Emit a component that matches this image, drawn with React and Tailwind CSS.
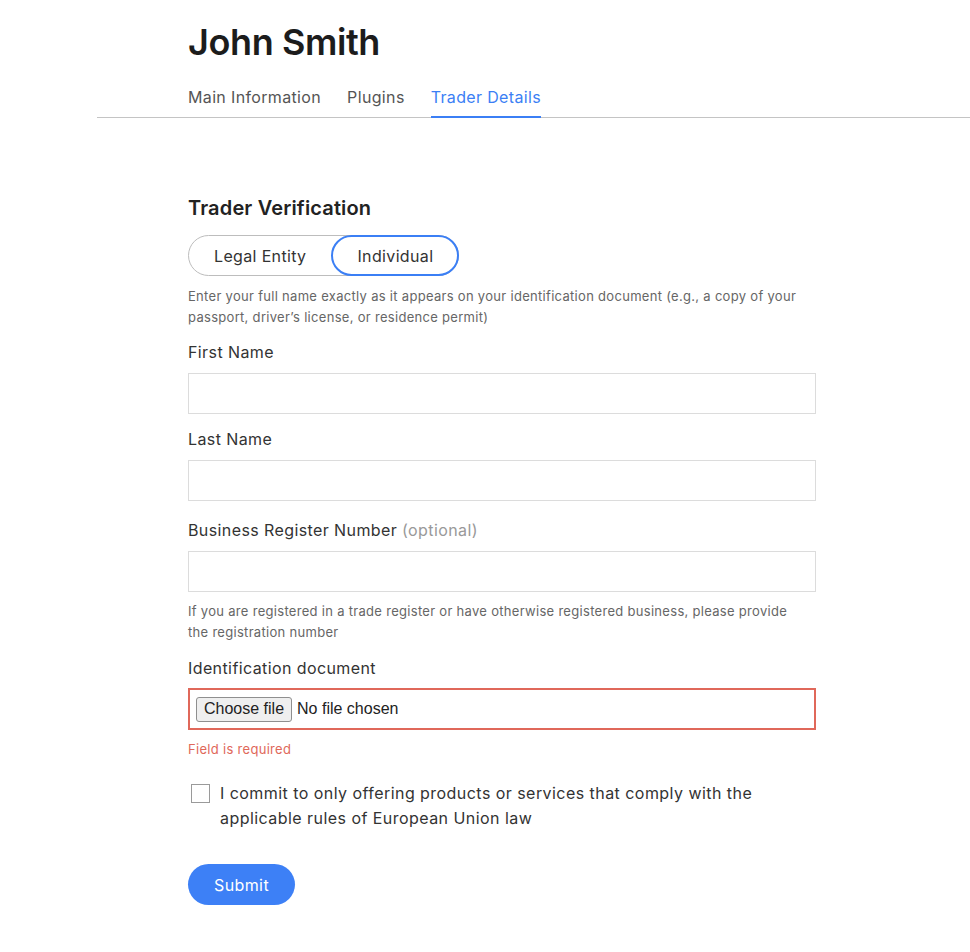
import { useState } from "react";

function Field({ label, optional, className = "" }) {
  return (
    <div className={className}>
      <label className="block text-[16px] leading-6 tracking-[0.4px] text-[#333]">
        {label}
        {optional && <span className="text-[#999]"> (optional)</span>}
      </label>
      <input
        type="text"
        className="mt-[9px] block w-full h-[41px] border border-[#dcdcdc] px-3 outline-none focus:border-[#3b7ff5]"
      />
    </div>
  );
}

function App() {
  const [kind, setKind] = useState("individual");
  const [agree, setAgree] = useState(false);

  return (
    <div className="min-h-screen bg-white font-['Inter',sans-serif] text-[#222]">
      <div className="pl-[97px]">
        <div className="border-b border-[#c4c4c4]">
          <div className="pl-[91px]">
            <h1 className="pt-[20px] text-[36px] leading-[44px] font-semibold text-[#1c1c1c] tracking-[-0.4px]">
              John Smith
            </h1>
            <nav className="mt-[21px] flex gap-[26px] text-[16px] leading-6 tracking-[0.35px]">
              <button className="pb-[7px] text-[#555] border-b-2 border-transparent -mb-px">
                Main Information
              </button>
              <button className="pb-[7px] text-[#555] border-b-2 border-transparent -mb-px">
                Plugins
              </button>
              <button className="pb-[7px] text-[#3b7ff5] border-b-2 border-[#3b7ff5] -mb-px">
                Trader Details
              </button>
            </nav>
          </div>
        </div>

        <div className="pl-[91px] w-[719px] pb-[40px]">
          <h2 className="mt-[76px] text-[20px] leading-7 font-semibold tracking-[0.15px] text-[#222]">
            Trader Verification
          </h2>

          <div className="mt-[13px] inline-flex h-[41px] rounded-full border border-[#bdbdbd] tracking-[0.35px]">
            <button
              onClick={() => setKind("legal")}
              className={`-m-px pl-[25px] pr-[26px] rounded-full text-[16px] text-[#333] ${
                kind === "legal" ? "border-2 border-[#3b7ff5]" : "border border-transparent"
              }`}
            >
              Legal Entity
            </button>
            <button
              onClick={() => setKind("individual")}
              className={`-m-px px-[24px] rounded-full text-[16px] text-[#333] ${
                kind === "individual" ? "border-2 border-[#3b7ff5]" : "border border-transparent"
              }`}
            >
              Individual
            </button>
          </div>

          <p className="mt-[10px] text-[13px] leading-[21px] tracking-[0.3px] text-[#666]">
            Enter your full name exactly as it appears on your identification document (e.g., a copy of your
            <br />
            passport, driver’s license, or residence permit)
          </p>

          <Field label="First Name" className="mt-[12px]" />
          <Field label="Last Name" className="mt-[13px]" />
          <Field label="Business Register Number" optional className="mt-[17px]" />

          <p className="mt-[9px] text-[13px] leading-[21px] tracking-[0.3px] text-[#666]">
            If you are registered in a trade register or have otherwise registered business, please provide
            <br />
            the registration number
          </p>

          <div className="mt-[13px]">
            <label className="block text-[16px] leading-6 tracking-[0.4px] text-[#333]">
              Identification document
            </label>
            <div className="mt-[8px] h-[42px] border-2 border-[#e0685a] flex items-center pl-[6px] font-['Liberation_Sans',sans-serif] text-[16px] text-[#222]">
              <button className="h-[25px] px-[7px] border border-[#8f8f8f] bg-[#efefef] rounded-[3px] text-[16px] leading-none">
                Choose file
              </button>
              <span className="ml-[5px]">No file chosen</span>
            </div>
            <p className="mt-[9px] text-[13px] leading-5 tracking-[0.3px] text-[#e0685a]">Field is required</p>
          </div>

          <label className="mt-[22px] flex items-start gap-[10px] cursor-pointer">
            <span
              onClick={() => setAgree(!agree)}
              className={`mt-[3px] ml-[3px] shrink-0 w-[19px] h-[19px] border border-[#9a9a9a] flex items-center justify-center ${
                agree ? "bg-[#3b7ff5] border-[#3b7ff5]" : "bg-white"
              }`}
            >
              {agree && (
                <svg viewBox="0 0 16 16" className="w-3 h-3" fill="none" stroke="white" strokeWidth="2.5">
                  <path d="M3 8.5l3 3 7-7" />
                </svg>
              )}
            </span>
            <span className="text-[16px] leading-[25px] tracking-[0.45px] text-[#333]">
              I commit to only offering products or services that comply with the
              <br />
              applicable rules of European Union law
            </span>
          </label>

          <button className="mt-[33px] h-[41px] w-[107px] rounded-full bg-[#3d80f6] text-white text-[16px] tracking-[0.4px]">
            Submit
          </button>
        </div>
      </div>
    </div>
  );
}

export default App;
